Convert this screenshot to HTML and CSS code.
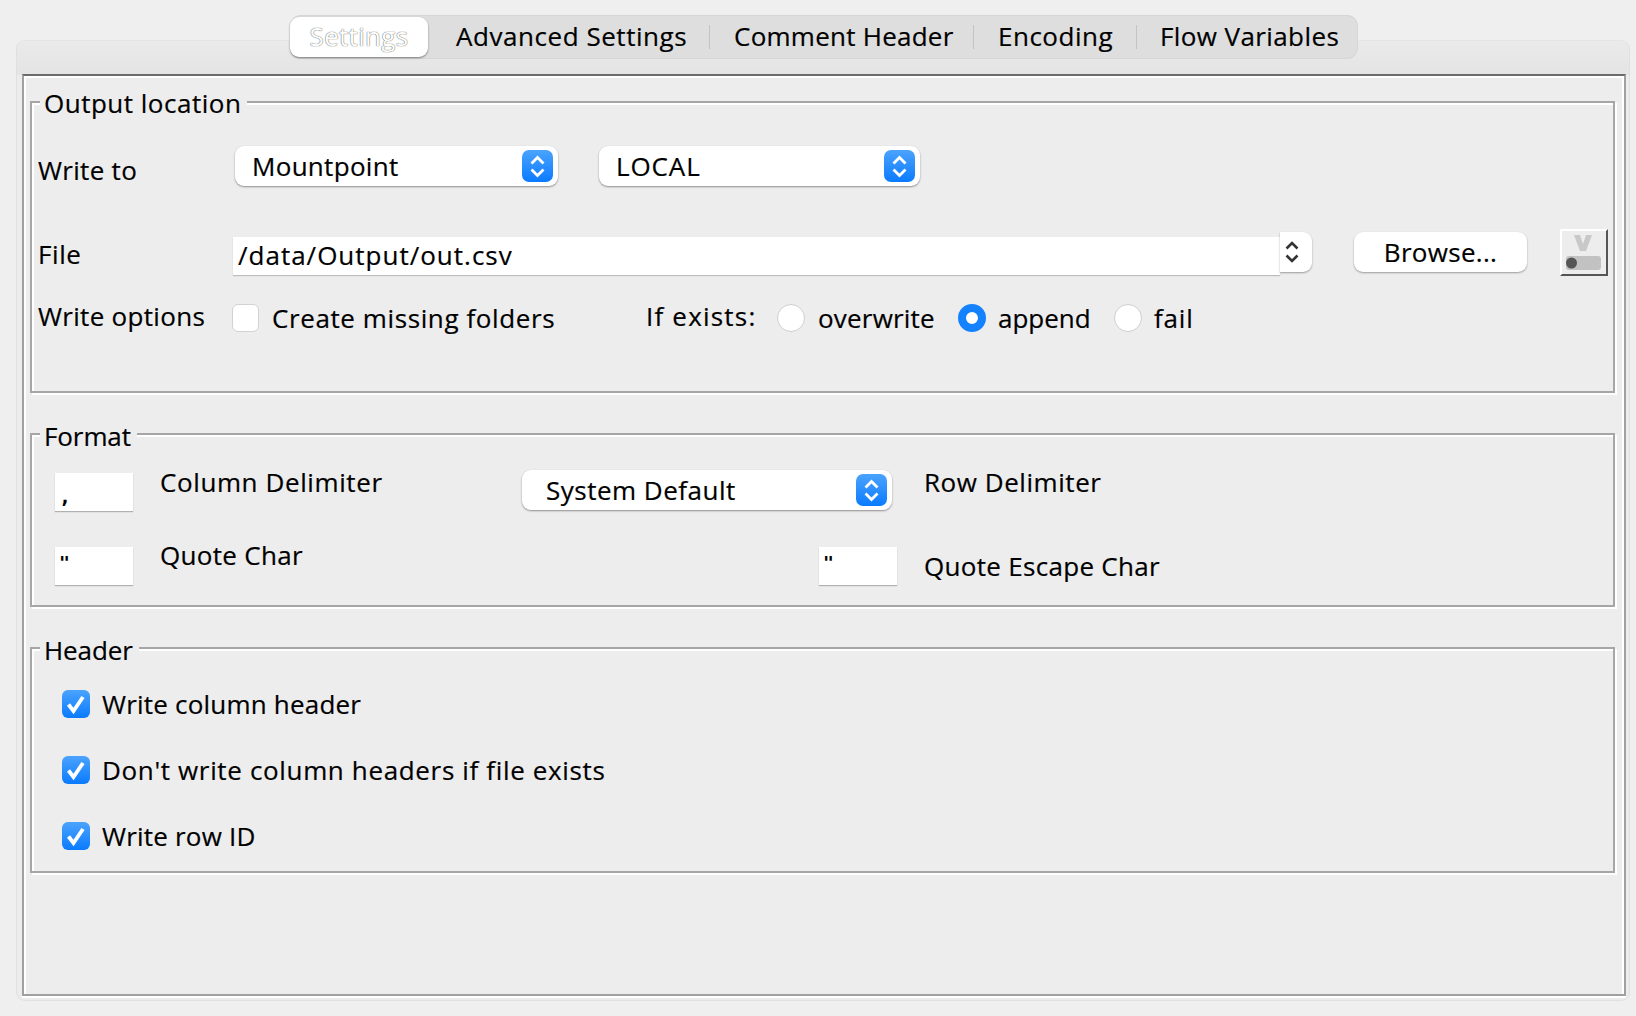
FILE: index.html
```html
<!DOCTYPE html>
<html lang="en">
<head>
<meta charset="utf-8">
<title>Settings</title>
<link rel="stylesheet" href="styles.css">
</head>
<body>
<svg class="defs" width="0" height="0" aria-hidden="true">
  <defs>
    <linearGradient id="blue" x1="0" y1="0" x2="0" y2="1">
      <stop offset="0" stop-color="#4ba3fd"/>
      <stop offset="1" stop-color="#0a7bff"/>
    </linearGradient>
    <symbol id="stepper" viewBox="0 0 31 32">
      <rect width="31" height="32" rx="7" fill="url(#blue)"/>
      <path d="M9.500 13.500 15.500 7.500 21.500 13.500M9.500 19.500 15.500 25.500 21.500 19.500" fill="none" stroke="#fff" stroke-width="2.800"/>
    </symbol>
    <symbol id="check" viewBox="0 0 28 28">
      <rect width="28" height="28" rx="6" fill="url(#blue)"/>
      <path d="M6.500 14.500 11.500 21 21 7" fill="none" stroke="#fff" stroke-width="3.800"/>
    </symbol>
  </defs>
</svg>
<nav class="tabbar">
  <span class="tab tab-active">Settings</span>
  <span class="tab tab-advanced">Advanced Settings</span>
  <span class="tab-sep"></span>
  <span class="tab tab-comment">Comment Header</span>
  <span class="tab-sep"></span>
  <span class="tab tab-encoding">Encoding</span>
  <span class="tab-sep"></span>
  <span class="tab tab-flow">Flow Variables</span>
</nav>
<main class="pane">
  <div class="box">
    <section class="group group-output">
      <h2 class="legend legend-output">Output location</h2>
      <div class="row row-write">
        <span class="label label-write">Write to</span>
        <div class="select select-mount"><span>Mountpoint</span><svg class="stepper"><use href="#stepper"/></svg></div>
        <div class="select select-local"><span>LOCAL</span><svg class="stepper"><use href="#stepper"/></svg></div>
      </div>
      <div class="row row-file">
        <span class="label label-file">File</span>
        <div class="combo">
          <div class="combo-field">/data/Output/out.csv</div>
          <div class="combo-arrow">
            <svg width="16" height="26" viewBox="0 0 16 26"><path d="M2.500 9.500 8 4 13.500 9.500M2.500 16.500 8 22 13.500 16.500" fill="none" stroke="#333" stroke-width="2.600"/></svg>
          </div>
        </div>
        <button class="button" type="button">Browse...</button>
        <div class="varbtn">
          <svg width="44" height="44" viewBox="0 0 44 44">
            <path d="M11 3H17L20 12 23 3H29L23 19H17Z" fill="#c8c8c8"/>
            <rect x="3" y="24" width="35" height="14" rx="3" fill="#c2c2c2"/>
            <circle cx="8.500" cy="31" r="5.500" fill="#555"/>
          </svg>
        </div>
      </div>
      <div class="row row-options">
        <span class="label label-options">Write options</span>
        <span class="box-empty"></span>
        <span class="text text-create">Create missing folders</span>
        <span class="label label-exists">If exists:</span>
        <span class="radio"></span>
        <span class="text text-overwrite">overwrite</span>
        <span class="radio radio-on"></span>
        <span class="text text-append">append</span>
        <span class="radio"></span>
        <span class="text text-fail">fail</span>
      </div>
    </section>

    <section class="group group-format">
      <h2 class="legend legend-tight">Format</h2>
      <div class="row row-delim">
        <div class="char char-comma">,</div>
        <span class="label label-col">Column Delimiter</span>
        <div class="select select-system"><span>System Default</span><svg class="stepper"><use href="#stepper"/></svg></div>
        <span class="label label-rowd">Row Delimiter</span>
      </div>
      <div class="row row-quote">
        <div class="char">"</div>
        <span class="label label-quote">Quote Char</span>
        <div class="char char-escape">"</div>
        <span class="label label-escape">Quote Escape Char</span>
      </div>
    </section>

    <section class="group group-header">
      <h2 class="legend legend-tight">Header</h2>
      <div class="row row-check row-check-first"><svg class="check"><use href="#check"/></svg><span class="text text-column">Write column header</span></div>
      <div class="row row-check"><svg class="check"><use href="#check"/></svg><span class="text text-dont">Don't write column headers if file exists</span></div>
      <div class="row row-check"><svg class="check"><use href="#check"/></svg><span class="text text-rowid">Write row ID</span></div>
    </section>
  </div>
</main>
</body>
</html>
```
FILE: styles.css
```css
* { box-sizing: border-box; }
html, body { margin: 0; height: 1016px; overflow: hidden; }
body {
  background: #efefef;
  color: #000;
  font-family: "Open Sans", "DejaVu Sans", sans-serif;
  font-size: 26px;
  line-height: 30px;
  letter-spacing: 0.3px;
  padding-top: 15px;
  -webkit-text-stroke: 0.2px #000;
}
.defs { display: block; height: 0; }

/* tabs */
.tabbar {
  position: relative;
  z-index: 2;
  display: flex;
  align-items: center;
  width: 1068px;
  height: 44px;
  margin-left: 290px;
  background: #dedede;
  border: 1px solid #d6d6d6;
  border-left: 0;
  border-radius: 11px;
}
.tab { white-space: nowrap; margin-bottom: 2px; }
.tab-active {
  display: flex;
  align-items: center;
  justify-content: center;
  width: 138px;
  height: 40px;
  margin-bottom: 0;
  padding-bottom: 2px;
  background: #fff;
  border-radius: 9px;
  box-shadow: 0 1px 2px rgba(0,0,0,.45);
  color: #fff;
  -webkit-text-stroke: 0;
  text-shadow: 0 0 1px #555, 0 0 1px #888;
}
.tab-advanced { margin-left: 28px; width: 253px; letter-spacing: 0.55px; }
.tab-sep { width: 1px; height: 24px; background: #c4c4c4; }
.tab-comment { margin-left: 24px; width: 239px; letter-spacing: 0.25px; }
.tab-encoding { margin-left: 24px; width: 138px; letter-spacing: 0.5px; }
.tab-flow { margin-left: 23px; letter-spacing: 0.4px; }

/* pane */
.pane {
  height: 961px;
  margin: -19px 6px 0 16px;
  padding: 33px 3px 0 5px;
  background: linear-gradient(#eaeaea, #e4e4e4 34px, #ececec 34px);
  border: 1px solid #e0e0e0;
  border-top-color: #e4e4e4;
  border-radius: 9px;
}
.box {
  height: 922px;
  padding: 25px 9px 0 6px;
  background: #ededed;
  border: 2px solid #a0a0a0;
  border-top-color: #6b6b6b;
  box-shadow: inset 2px 2px 0 #fff, inset -2px 0 0 #fff, 0 2px 0 #fff;
}

/* groups */
.group {
  display: flex;
  flex-direction: column;
  border: 2px solid #a6a6a6;
  box-shadow: inset 2px 2px 0 #fff, 2px 2px 0 #fff;
  margin-bottom: 40px;
}
.group-output { height: 292px; }
.group-format { height: 174px; }
.group-header { height: 226px; }
.legend {
  align-self: flex-start;
  height: 30px;
  margin: -15px 0 0 8px;
  padding: 0 6px 0 4px;
  background: #ededed;
  font: inherit;
  letter-spacing: inherit;
  white-space: nowrap;
}
.legend-output { letter-spacing: 0.5px; }
.legend-tight { letter-spacing: -0.1px; margin-top: -14px; }
.row { display: flex; align-items: flex-start; white-space: nowrap; }
.label, .text { display: block; flex: none; }

/* selects */
.select {
  flex: none;
  display: flex;
  align-items: center;
  justify-content: space-between;
  height: 40px;
  padding: 0 5px 0 17px;
  background: #fff;
  border-radius: 9px;
  box-shadow: 0 1px 2px rgba(0,0,0,.4);
}
.stepper { flex: none; width: 31px; height: 32px; }

/* output location */
.row-write { margin-top: 28px; padding-left: 6px; }
.label-write { width: 197px; margin-top: 9px; }
.select-mount { width: 323px; }
.select-local { width: 321px; margin-left: 41px; letter-spacing: 0.9px; }
.row-file { margin-top: 43px; padding-left: 6px; }
.label-file { width: 195px; margin-top: 10px; letter-spacing: 0.6px; }
.combo { display: flex; align-items: flex-start; width: 1080px; flex: none; }
.combo-field {
  width: 1047px;
  height: 38px;
  margin-top: 8px;
  padding: 3px 0 0 5px;
  background: #fff;
  box-shadow: 0 1px 1px rgba(0,0,0,.2);
  letter-spacing: 1px;
}
.combo-arrow {
  display: flex;
  align-items: center;
  justify-content: center;
  width: 32px;
  height: 40px;
  margin-top: 3px;
  padding-right: 8px;
  background: #fff;
  border-radius: 0 9px 9px 0;
  box-shadow: 0 1px 2px rgba(0,0,0,.35);
}
.button {
  flex: none;
  width: 173px;
  height: 40px;
  margin: 3px 0 0 41px;
  padding: 0;
  background: #fff;
  border: 0;
  border-radius: 9px;
  box-shadow: 0 1px 2px rgba(0,0,0,.35);
  font: inherit;
  letter-spacing: inherit;
  color: #000;
}
.varbtn {
  flex: none;
  width: 48px;
  height: 47px;
  margin-left: 33px;
  padding: 1px;
  border: 2px solid;
  border-color: #fff #555 #555 #fff;
}
.varbtn svg { display: block; }
.row-options { margin-top: 28px; padding-left: 6px; }
.label-options { width: 194px; margin-top: -3px; }
.box-empty {
  flex: none;
  width: 27px;
  height: 28px;
  background: #fff;
  border: 1px solid #d2d2d2;
  border-radius: 6px;
}
.text-create { width: 374px; margin: -1px 0 0 13px; letter-spacing: 0.6px; }
.label-exists { width: 131px; margin-top: -3px; letter-spacing: 1.2px; }
.radio {
  flex: none;
  width: 28px;
  height: 28px;
  background: #fff;
  border: 1px solid #cfcfcf;
  border-radius: 50%;
}
.radio-on { border: 8.500px solid #1482fe; }
.text-overwrite { width: 140px; margin: -1px 0 0 13px; letter-spacing: 0.2px; }
.text-append { width: 116px; margin: -1px 0 0 12px; letter-spacing: 0; }
.text-fail { margin: -1px 0 0 12px; letter-spacing: 0.8px; }

/* format */
.row-delim { margin-top: 22px; padding-left: 23px; }
.char {
  flex: none;
  width: 78px;
  height: 38px;
  padding-left: 4px;
  background: #fff;
  box-shadow: 0 1px 1px rgba(0,0,0,.25);
  font-family: "DejaVu Sans Mono", monospace;
  font-weight: 700;
  font-size: 18px;
  letter-spacing: 0;
  line-height: 32px;
  -webkit-text-stroke: 0;
}
.char-comma { line-height: 46px; font-size: 20px; }
.label-col { width: 362px; margin: -6px 0 0 27px; letter-spacing: 0.6px; }
.select-system { width: 370px; margin-top: -3px; padding-left: 24px; letter-spacing: 0.5px; }
.label-rowd { margin: -6px 0 0 32px; letter-spacing: 0.55px; }
.row-quote { margin-top: 36px; padding-left: 23px; }
.label-quote { width: 658px; margin: -7px 0 0 27px; }
.char-escape { margin-left: 1px; }
.label-escape { margin: 4px 0 0 27px; }

/* header */
.row-check { align-items: center; margin-left: 30px; height: 28px; margin-top: 38px; }
.row-check-first { margin-top: 25px; }
.check { flex: none; width: 28px; height: 28px; margin-right: 12px; }
.text-column { letter-spacing: 0.2px; }
.text-dont { letter-spacing: 0.65px; }
.text-rowid { letter-spacing: 0.2px; }
```
